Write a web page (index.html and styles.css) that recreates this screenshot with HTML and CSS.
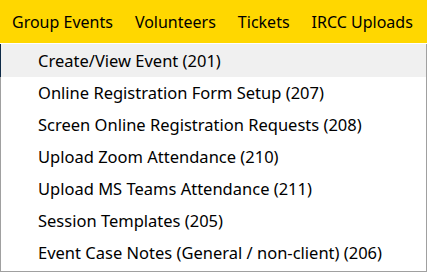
FILE: index.html
```html
<!DOCTYPE html>
<html>
<head>
<meta charset="utf-8">
<link rel="stylesheet" href="styles.css">
</head>
<body>
<nav class="topbar">
  <span class="top-item">Group Events</span>
  <span class="top-item">Volunteers</span>
  <span class="top-item">Tickets</span>
  <span class="top-item">IRCC Uploads</span>
</nav>
<div class="gap"></div>
<ul class="dropdown">
  <li class="item active">Create/View Event (201)</li>
  <li class="item">Online Registration Form Setup (207)</li>
  <li class="item">Screen Online Registration Requests (208)</li>
  <li class="item">Upload Zoom Attendance (210)</li>
  <li class="item">Upload MS Teams Attendance (211)</li>
  <li class="item">Session Templates (205)</li>
  <li class="item">Event Case Notes (General / non-client) (206)</li>
</ul>
</body>
</html>
```
FILE: styles.css
```css
html, body {
  margin: 0;
  padding: 0;
  background: #ffffff;
}
body {
  font-family: "Noto Sans", "Open Sans", sans-serif;
  font-size: 16.5px;
  color: #000;
  width: 427px;
  height: 272px;
  overflow: hidden;
}
.topbar {
  display: flex;
  gap: 22px;
  height: 43px;
  align-items: center;
  padding: 0 12px;
  background: #ffd700;
  white-space: nowrap;
  font-size: 16px;
}
.gap {
  height: 1px;
}
.dropdown {
  list-style: none;
  margin: 0;
  padding: 0 0 3px 0;
  border: 1px solid #a0a0a0;
  border-top: none;
  height: 224px;
}
.item {
  height: 32px;
  line-height: 32px;
  padding-left: 37px;
  white-space: nowrap;
}
.item.active {
  height: 33px;
  line-height: 33px;
  background: #f0f0f0;
  box-shadow: inset 1px 0 0 #0e2a47;
  margin-left: -1px;
  padding-left: 38px;
}
```
